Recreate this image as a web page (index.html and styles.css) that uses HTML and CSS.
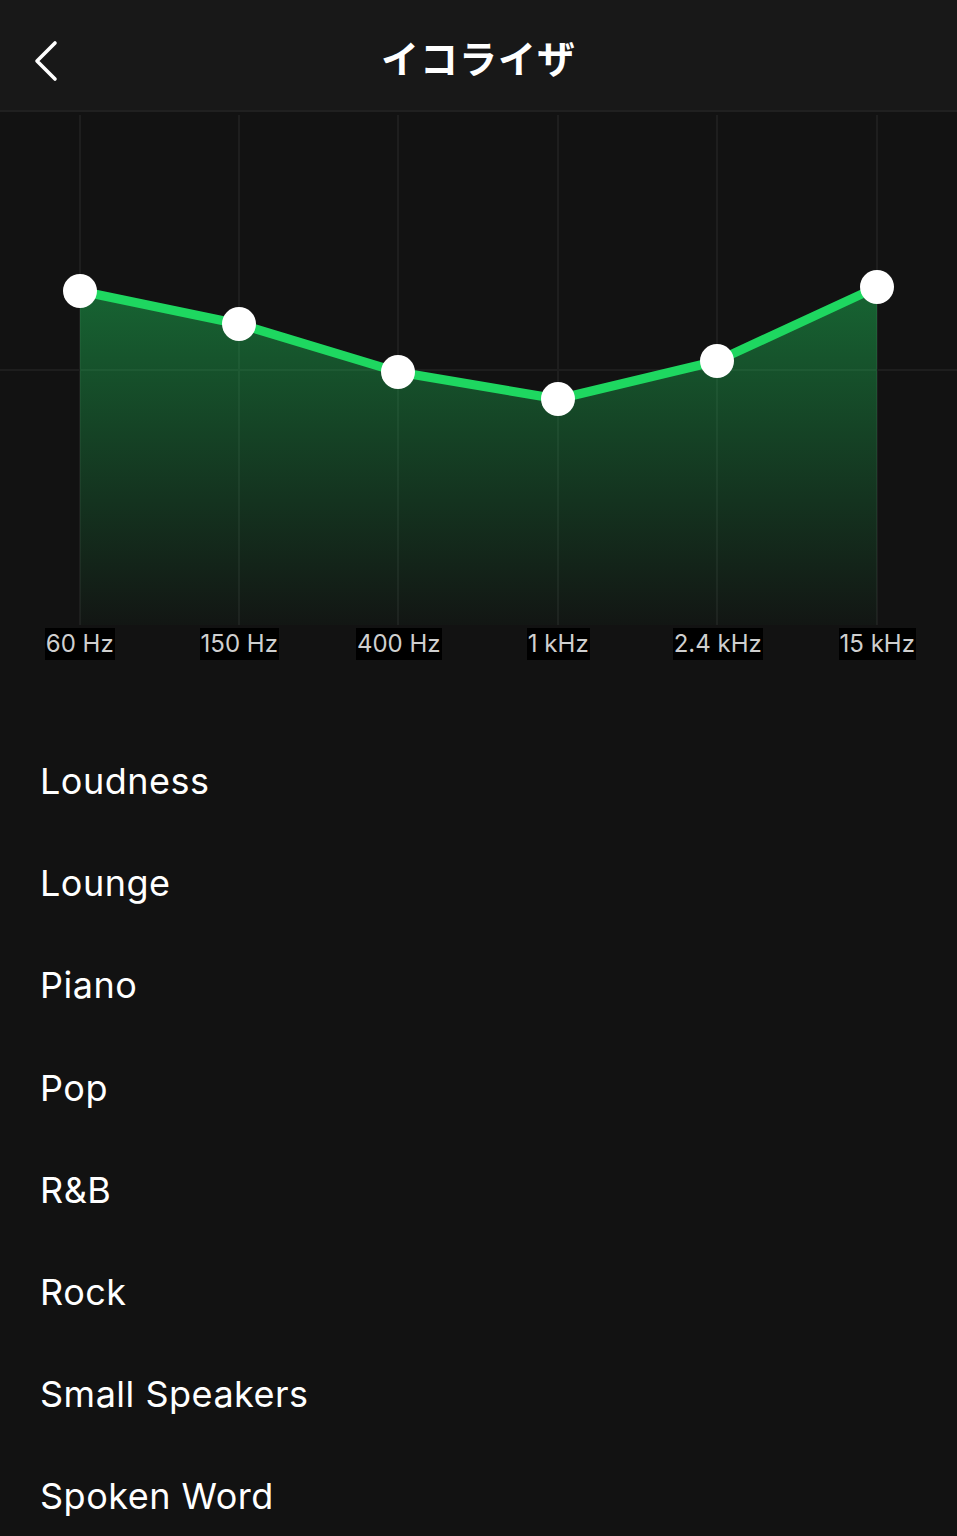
FILE: index.html
```html
<!DOCTYPE html>
<html lang="ja">
<head>
<meta charset="utf-8">
<title>イコライザ</title>
<link rel="stylesheet" href="styles.css">
</head>
<body>
<header class="topbar">
  <button class="back" aria-label="戻る">
    <svg width="30" height="44" viewBox="0 0 30 44"><polyline points="22,5 4,23 22,41" fill="none" stroke="#fff" stroke-width="3.6" stroke-linecap="round" stroke-linejoin="round"/></svg>
  </button>
  <h1 class="title">イコライザ</h1>
</header>
<section class="chart">
  <svg class="eq" width="957" height="513" viewBox="0 0 957 513">
    <defs>
      <linearGradient id="fill" x1="0" y1="0" x2="0" y2="1">
        <stop offset="0" stop-color="#1ed760" stop-opacity="0.42"/>
        <stop offset="1" stop-color="#1ed760" stop-opacity="0.02"/>
      </linearGradient>
    </defs>
    <g stroke="#1e1e1e" stroke-width="2">
      <line x1="80" y1="3" x2="80" y2="513"/>
      <line x1="239" y1="3" x2="239" y2="513"/>
      <line x1="398" y1="3" x2="398" y2="513"/>
      <line x1="558" y1="3" x2="558" y2="513"/>
      <line x1="717" y1="3" x2="717" y2="513"/>
      <line x1="877" y1="3" x2="877" y2="513"/>
      <line x1="0" y1="258" x2="957" y2="258"/>
    </g>
    <polygon points="80,179 239,212 398,260 558,287 717,249 877,175 877,513 80,513" fill="url(#fill)"/>
    <polyline points="80,179 239,212 398,260 558,287 717,249 877,175" fill="none" stroke="#1ed760" stroke-width="9" stroke-linejoin="round"/>
    <g fill="#fff">
      <circle cx="80" cy="179" r="17"/>
      <circle cx="239" cy="212" r="17"/>
      <circle cx="398" cy="260" r="17"/>
      <circle cx="558" cy="287" r="17"/>
      <circle cx="717" cy="249" r="17"/>
      <circle cx="877" cy="175" r="17"/>
    </g>
  </svg>
  <div class="labels">
    <span class="label">60 Hz</span>
    <span class="label">150 Hz</span>
    <span class="label">400 Hz</span>
    <span class="label">1 kHz</span>
    <span class="label">2.4 kHz</span>
    <span class="label">15 kHz</span>
  </div>
</section>
<ul class="presets">
  <li>Loudness</li>
  <li>Lounge</li>
  <li>Piano</li>
  <li>Pop</li>
  <li>R&amp;B</li>
  <li>Rock</li>
  <li>Small Speakers</li>
  <li>Spoken Word</li>
</ul>
</body>
</html>
```

FILE: styles.css
```css
html, body {
  margin: 0;
  padding: 0;
  background: #121212;
  color: #fff;
  font-family: Inter, "Noto Sans", "Noto Sans CJK JP", sans-serif;
  overflow: hidden;
}
.topbar {
  position: relative;
  height: 110px;
  background: #181818;
  border-bottom: 2px solid #202020;
  display: flex;
  align-items: center;
  justify-content: center;
}
.back {
  position: absolute;
  left: 33px;
  top: 38px;
  padding: 0;
  border: 0;
  background: none;
  width: 30px;
  height: 44px;
}
.back svg { display: block; }
.title {
  margin: 0;
  font-family: "Noto Sans CJK JP", sans-serif;
  font-weight: 700;
  font-size: 38px;
  letter-spacing: 1px;
  line-height: 1;
  padding-top: 4px;
}
.chart {
  background: #121212;
}
.eq { display: block; }
.labels {
  display: grid;
  grid-template-columns: repeat(6, 1fr);
  width: 957px;
  height: 37px;
  align-items: center;
  justify-items: center;
}
.label {
  background: #000;
  color: #cfcfcf;
  font-size: 24px;
  line-height: 32px;
  padding: 0 1px;
  letter-spacing: 0;
}
.presets {
  list-style: none;
  margin: 68px 0 0;
  padding: 0;
}
.presets li {
  height: 102.2px;
  display: flex;
  align-items: center;
  padding-left: 40px;
  font-size: 36px;
  letter-spacing: 0.5px;
  color: #fff;
}
```
